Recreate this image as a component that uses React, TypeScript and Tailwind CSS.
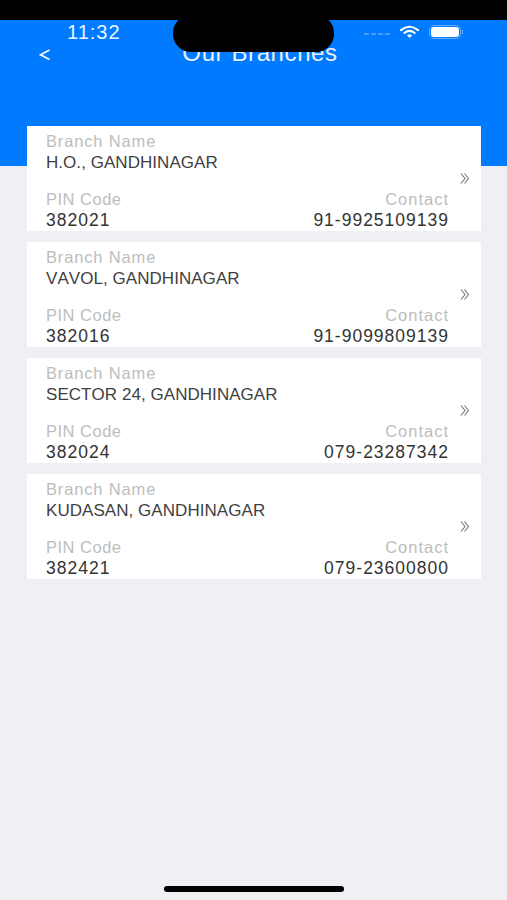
import React from "react";

const branches = [
  { name: "H.O., GANDHINAGAR", pin: "382021", contact: "91-9925109139" },
  { name: "VAVOL, GANDHINAGAR", pin: "382016", contact: "91-9099809139" },
  { name: "SECTOR 24, GANDHINAGAR", pin: "382024", contact: "079-23287342" },
  { name: "KUDASAN, GANDHINAGAR", pin: "382421", contact: "079-23600800" },
];

function Card({ b }: { b: (typeof branches)[number] }) {
  return (
    <div className="relative h-[105px] bg-white pl-[19px] pr-[32px] pt-[6px]">
      <div className="text-[16.5px] leading-[18px] text-[#bdbdbd] tracking-[0.85px]">Branch Name</div>
      <div className="mt-[4px] text-[17px] leading-[18px] text-[#3f3f3f] [font-kerning:none] tracking-[0.05px]">{b.name}</div>
      <div className="mt-[18px] flex justify-between text-[16.5px] leading-[18px] text-[#bdbdbd]">
        <span className="tracking-[0.5px]">PIN Code</span>
        <span className="tracking-[1px]">Contact</span>
      </div>
      <div className="mt-[3px] flex justify-between text-[17.5px] leading-[18px] text-[#333333] tracking-[1px]">
        <span>{b.pin}</span>
        <span>{b.contact}</span>
      </div>
      <svg className="absolute left-[433px] top-[46px]" width="10" height="13" viewBox="0 0 10 13" fill="none" stroke="#777777" strokeWidth="1.1">
        <path d="M1 1.5 L5 6.5 L1 11.5" />
        <path d="M4.5 1.5 L8.5 6.5 L4.5 11.5" />
      </svg>
    </div>
  );
}

export default function App() {
  return (
    <div className="relative h-[900px] w-[507px] overflow-hidden bg-[#efeff4] font-['Liberation_Sans',Arial,sans-serif]">
      <div className="h-5 bg-black" />
      <div className="h-[146px] bg-[#007aff] text-white">
        <div className="flex h-[23px] items-center justify-between pl-[67px] pr-[44px]">
          <span className="text-[20px] font-medium leading-[24px] tracking-[1px] text-[#eaf3ff]">11:32</span>
          <div className="flex items-center gap-[9px]">
            <div className="mt-[5px] flex gap-[2px]">
              <span className="h-[2px] w-[5px] rounded-full bg-[#4d9fff]" />
              <span className="h-[2px] w-[5px] rounded-full bg-[#4d9fff]" />
              <span className="h-[2px] w-[5px] rounded-full bg-[#4d9fff]" />
              <span className="h-[2px] w-[5px] rounded-full bg-[#4d9fff]" />
            </div>
            <svg width="21" height="14" viewBox="0 0 22 14" fill="none" stroke="white" strokeWidth="2.2" strokeLinecap="round">
              <path d="M2 5 Q11 -2 20 5" />
              <path d="M5.5 8 Q11 3.5 16.5 8" />
              <path d="M11 12.5 L9 10.5 Q11 9 13 10.5 Z" fill="white" strokeWidth="1" />
            </svg>
            <div className="flex items-center">
              <div className="h-[14px] w-[32px] rounded-[5px] border border-[#66adff] p-[1px]">
                <div className="h-full w-full rounded-[3px] bg-white" />
              </div>
              <div className="ml-[1px] h-[4px] w-[1px] bg-[#66adff]" />
            </div>
          </div>
        </div>
        <div className="relative flex h-[20px] items-center justify-center pl-[13px]">
          <span className="text-[24px] leading-[20px] tracking-[0.6px] text-[#e8f2ff]">Our Branches</span>
          <svg className="absolute left-[39px] top-[5px]" width="12" height="14" viewBox="0 0 12 14" fill="none" stroke="white" strokeWidth="1.6">
            <path d="M10.5 2 L1.5 6.8 L10.5 11.5" />
          </svg>
        </div>
      </div>
      <div className="-mt-10 flex flex-col gap-[11px] pl-[27px] pr-[26px]">
        {branches.map((b) => (
          <Card key={b.name} b={b} />
        ))}
      </div>
      <div className="absolute left-[173px] top-[15px] h-[37px] w-[161px] rounded-[18px] bg-black" />
      <div className="absolute bottom-[8px] left-[164px] h-[6px] w-[180px] rounded-full bg-black" />
    </div>
  );
}
